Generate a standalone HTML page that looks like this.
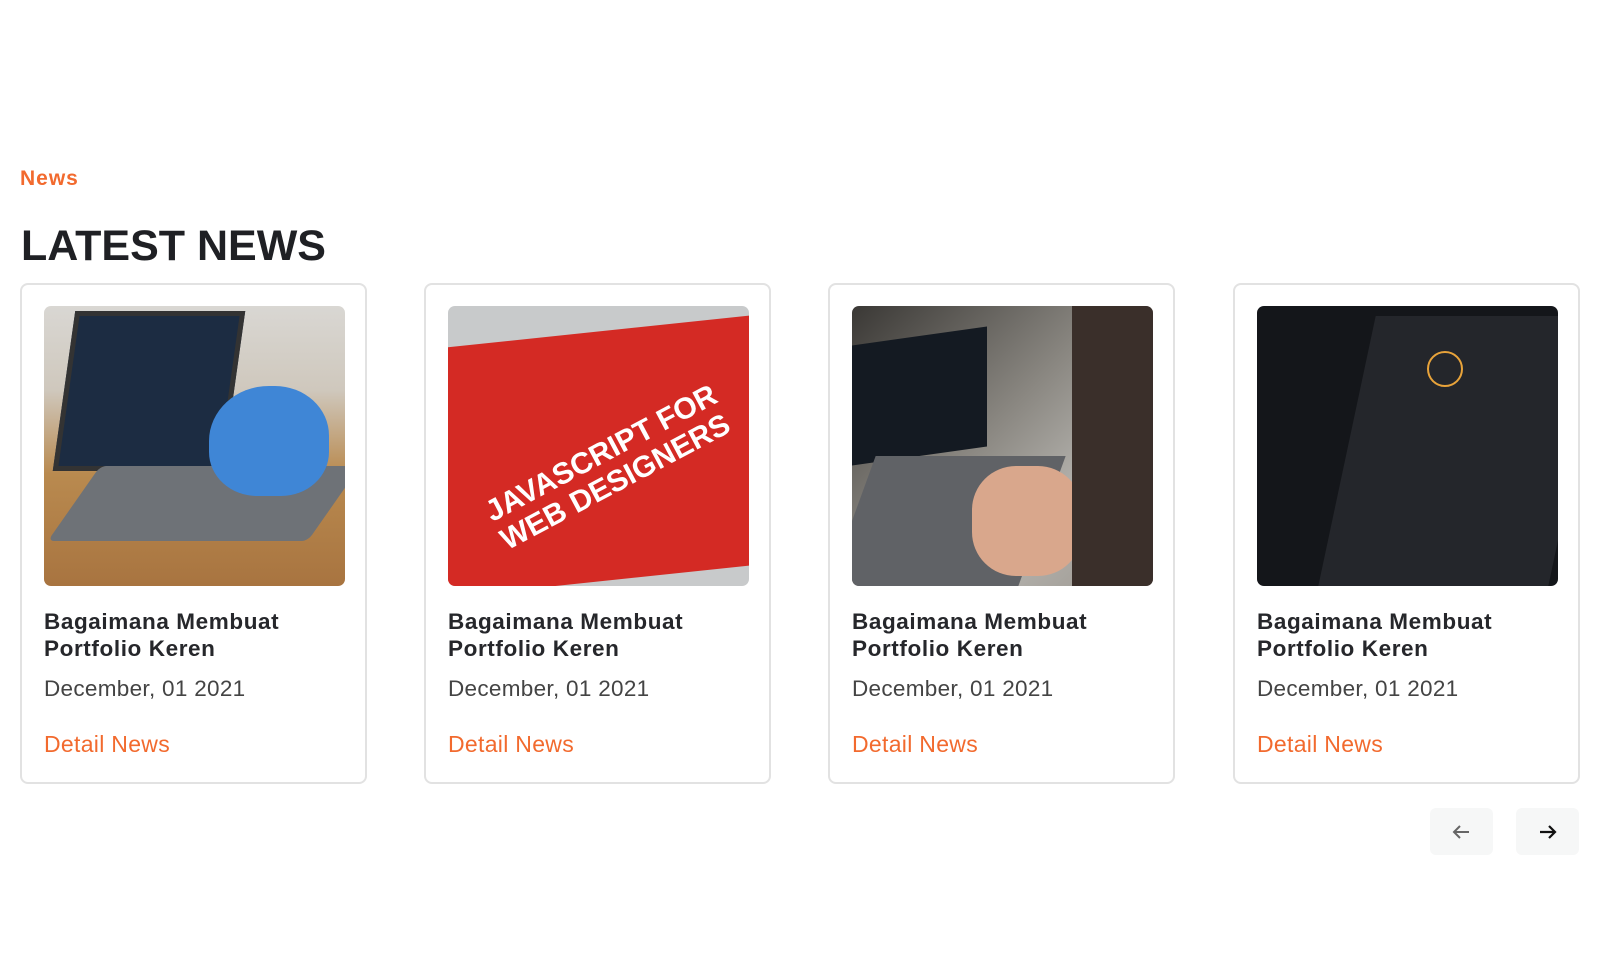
<!DOCTYPE html>
<html><head><style>
*{margin:0;padding:0;box-sizing:border-box}
body{width:1600px;height:960px;background:#fff;font-family:"Liberation Sans",sans-serif;position:relative;overflow:hidden}
.tag{position:absolute;left:20px;top:167px;color:#f26a2e;font-size:21px;font-weight:bold;letter-spacing:1px}
h1{position:absolute;left:21px;top:222px;font-size:43px;font-weight:900;color:#1f2024;letter-spacing:0}
.card{position:absolute;top:283px;width:347px;height:501px;border:2px solid #e2e2e2;border-radius:8px;background:#fff}
.img{position:absolute;left:22px;top:21px;width:301px;height:280px;border-radius:7px;overflow:hidden}
.t{position:absolute;left:22px;top:324px;font-size:22.5px;line-height:26.5px;font-weight:bold;color:#26272b;letter-spacing:0.6px}
.d{position:absolute;left:22px;top:391px;font-size:22.5px;color:#444;letter-spacing:0.3px}
.l{position:absolute;left:22px;top:446px;font-size:23px;color:#f26a2e;letter-spacing:0.3px}
.btn{position:absolute;top:808px;width:63px;height:47px;border-radius:6px;background:#f6f7f7}
</style></head><body>
<div class="tag">News</div>
<h1>LATEST NEWS</h1>

<div class="card" style="left:20px">
<div class="img" style="background:linear-gradient(180deg,#d9d7d3 0%,#cfc8bd 30%,#b98a4f 60%,#a87440 100%)">
<div style="position:absolute;left:20px;top:5px;width:170px;height:160px;background:#1c2c42;transform:skewX(-8deg);border:5px solid #333"></div>
<div style="position:absolute;left:30px;top:160px;width:260px;height:75px;background:#6e7277;transform:skewX(-35deg) ;border-radius:6px"></div>
<div style="position:absolute;left:165px;top:80px;width:120px;height:110px;background:#3f86d6;border-radius:50% 45% 40% 40%"></div>
</div>
<div class="t">Bagaimana Membuat<br>Portfolio Keren</div>
<div class="d">December, 01 2021</div>
<div class="l">Detail News</div>
</div>

<div class="card" style="left:424px">
<div class="img" style="background:#c8cacb">
<div style="position:absolute;left:-10px;top:25px;width:330px;height:250px;background:#d42a24;transform:skewY(-6deg)"></div>
<div style="position:absolute;left:30px;top:120px;width:300px;color:#fff;font-weight:bold;font-size:30px;transform:rotate(-28deg);line-height:32px;white-space:nowrap">JAVASCRIPT FOR<br>WEB DESIGNERS</div>
</div>
<div class="t">Bagaimana Membuat<br>Portfolio Keren</div>
<div class="d">December, 01 2021</div>
<div class="l">Detail News</div>
</div>

<div class="card" style="left:828px">
<div class="img" style="background:linear-gradient(135deg,#3a3835 0%,#8a8781 45%,#b4b2ad 70%,#9a958e 100%)">
<div style="position:absolute;left:0;top:30px;width:135px;height:120px;background:#141a22;transform:skewY(-8deg)"></div>
<div style="position:absolute;left:0;top:150px;width:190px;height:130px;background:#606266;transform:skewX(-20deg)"></div>
<div style="position:absolute;left:120px;top:160px;width:110px;height:110px;background:#d9a78c;border-radius:40%"></div>
<div style="position:absolute;left:220px;top:0;width:81px;height:280px;background:#3a2f2a"></div>
</div>
<div class="t">Bagaimana Membuat<br>Portfolio Keren</div>
<div class="d">December, 01 2021</div>
<div class="l">Detail News</div>
</div>

<div class="card" style="left:1233px">
<div class="img" style="background:#14161a">
<div style="position:absolute;left:90px;top:10px;width:230px;height:270px;background:#24262b;transform:skewX(-12deg)"></div>
<div style="position:absolute;left:170px;top:45px;width:36px;height:36px;border:2px solid #e8a33a;border-radius:50%"></div>
</div>
<div class="t">Bagaimana Membuat<br>Portfolio Keren</div>
<div class="d">December, 01 2021</div>
<div class="l">Detail News</div>
</div>

<div class="btn" style="left:1430px"><svg width="63" height="47" viewBox="0 0 63 47"><path d="M39 24H24M30 18l-6 6 6 6" stroke="#666" stroke-width="2" fill="none"/></svg></div>
<div class="btn" style="left:1516px"><svg width="63" height="47" viewBox="0 0 63 47"><path d="M24 24h15M33 18l6 6-6 6" stroke="#111" stroke-width="2.2" fill="none"/></svg></div>
</body></html>
